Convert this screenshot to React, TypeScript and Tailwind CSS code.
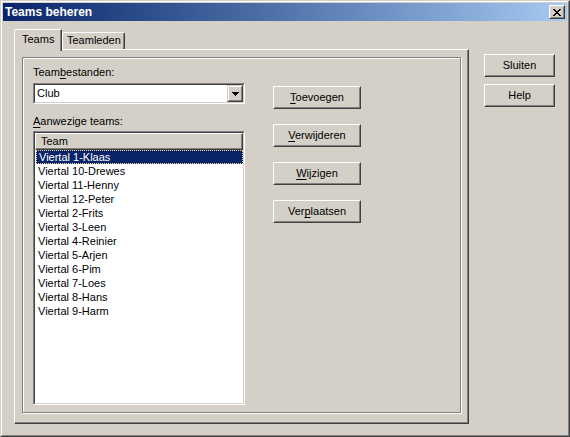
import React from "react";

const items = [
  "Viertal 1-Klaas",
  "Viertal 10-Drewes",
  "Viertal 11-Henny",
  "Viertal 12-Peter",
  "Viertal 2-Frits",
  "Viertal 3-Leen",
  "Viertal 4-Reinier",
  "Viertal 5-Arjen",
  "Viertal 6-Pim",
  "Viertal 7-Loes",
  "Viertal 8-Hans",
  "Viertal 9-Harm",
];

function Btn({ w, h, children }: { w: string; h: string; children: React.ReactNode }) {
  return (
    <div className={`${w} ${h} flex border border-t-white border-l-white border-r-[#404040] border-b-[#404040]`}>
      <div className="flex-1 flex items-center justify-center border border-t-[#d4d0c8] border-l-[#d4d0c8] border-r-[#808080] border-b-[#808080] leading-[13px]">
        {children}
      </div>
    </div>
  );
}

function U({ children }: { children: React.ReactNode }) {
  return <span className="underline underline-offset-[2px] decoration-[1px]">{children}</span>;
}

export default function App() {
  return (
    <div className="w-[570px] h-[437px] bg-[#d4d0c8] font-['Liberation_Sans',Arial,sans-serif] text-[11px] text-black leading-[13px] select-none">
      <div className="w-full h-full border border-t-[#d4d0c8] border-l-[#d4d0c8] border-r-[#404040] border-b-[#404040]">
        <div className="w-full h-full border border-t-white border-l-white border-r-[#808080] border-b-[#808080] p-px flex flex-col">
          {/* Title bar */}
          <div className="h-[18px] flex items-center justify-between bg-gradient-to-r from-[#0a246a] to-[#a6caf0] pl-[2px] pr-[2px]">
            <span className="text-white font-bold text-[12px] leading-[14px]">Teams beheren</span>
            <div className="w-[16px] h-[14px] flex border border-t-white border-l-white border-r-[#404040] border-b-[#404040] bg-[#d4d0c8]">
              <div className="flex-1 flex items-center justify-center border border-t-[#d4d0c8] border-l-[#d4d0c8] border-r-[#808080] border-b-[#808080]">
                <svg width="8" height="7" viewBox="0 0 8 7" shapeRendering="crispEdges">
                  <path d="M0 0h2v1H0zM6 0h2v1H6zM1 1h2v1H1zM5 1h2v1H5zM2 2h4v1H2zM3 3h2v1H3zM2 4h4v1H2zM1 5h2v1H1zM5 5h2v1H5zM0 6h2v1H0zM6 6h2v1H6z" fill="#000" />
                </svg>
              </div>
            </div>
          </div>

          {/* Content */}
          <div className="flex pl-[11px] pt-[8px]">
            {/* Tab control */}
            <div className="flex flex-col w-[455px]">
              <div className="flex items-start h-[20px]">
                <div className="relative z-10 w-[48px] h-[22px] bg-[#d4d0c8] flex border-l border-t border-r border-l-white border-t-white border-r-[#404040] rounded-tl-[2px]">
                  <div className="flex-1 border-r border-r-[#808080] pl-[7px] pt-[3px]">Teams</div>
                </div>
                <div className="mt-[3px] w-[63px] h-[17px] flex border-l border-t border-r border-l-white border-t-white border-r-[#404040] rounded-t-[2px]">
                  <div className="flex-1 border-r border-r-[#808080] pl-[4px] pt-[1px]">Teamleden</div>
                </div>
              </div>
              <div className="w-[455px] h-[375px] flex border border-t-white border-l-white border-r-[#404040] border-b-[#404040]">
                <div className="flex-1 border-r border-b border-r-[#808080] border-b-[#808080] pl-[7px] pt-[7px]">
                  {/* Group box */}
                  <div className="w-[439px] h-[356px] border border-[#808080] shadow-[inset_1px_1px_0_#fff,1px_1px_0_#fff] flex">
                    <div className="flex flex-col pl-[10px] pt-[8px] w-[222px]">
                      <div>
                        Team<U>b</U>estanden:
                      </div>
                      {/* Combo */}
                      <div className="mt-[4px] w-[212px] h-[21px] flex border border-t-[#808080] border-l-[#808080] border-r-white border-b-white">
                        <div className="flex-1 flex border border-t-[#404040] border-l-[#404040] border-r-[#d4d0c8] border-b-[#d4d0c8] bg-white">
                          <div className="flex-1 pl-[2px] pt-[2px]">Club</div>
                          <div className="w-[16px] h-[17px] bg-[#d4d0c8] flex border border-t-[#d4d0c8] border-l-[#d4d0c8] border-r-[#404040] border-b-[#404040]">
                            <div className="flex-1 flex items-center justify-center border border-t-white border-l-white border-r-[#808080] border-b-[#808080]">
                              <svg width="7" height="4" viewBox="0 0 7 4" shapeRendering="crispEdges">
                                <path d="M0 0h7v1H0zM1 1h5v1H1zM2 2h3v1H2zM3 3h1v1H3z" fill="#000" />
                              </svg>
                            </div>
                          </div>
                        </div>
                      </div>
                      <div className="mt-[11px]">
                        <U>A</U>anwezige teams:
                      </div>
                      {/* List view */}
                      <div className="mt-[3px] w-[212px] h-[274px] flex border border-t-[#808080] border-l-[#808080] border-r-white border-b-white">
                        <div className="flex-1 flex flex-col border border-t-[#404040] border-l-[#404040] border-r-[#d4d0c8] border-b-[#d4d0c8] bg-white">
                          <div className="h-[17px] flex border border-t-white border-l-white border-r-[#404040] border-b-[#404040] bg-[#d4d0c8]">
                            <div className="flex-1 border-r border-b border-r-[#808080] border-b-[#808080] pl-[5px] pt-[1px]">Team</div>
                          </div>
                          <div className="flex flex-col">
                            {items.map((t, i) =>
                              i === 0 ? (
                                <div key={t} className="h-[14px] ml-px bg-[#0a246a] text-white border border-dotted border-[#f5db95] pl-[2px] leading-[12px]">
                                  {t}
                                </div>
                              ) : (
                                <div key={t} className="h-[14px] pl-[3px] leading-[14px]">
                                  {t}
                                </div>
                              )
                            )}
                          </div>
                        </div>
                      </div>
                    </div>
                    <div className="flex flex-col gap-[15px] pt-[28px] ml-[28px]">
                      <Btn w="w-[88px]" h="h-[23px]">
                        <span><U>T</U>oevoegen</span>
                      </Btn>
                      <Btn w="w-[88px]" h="h-[23px]">
                        <span><U>V</U>erwijderen</span>
                      </Btn>
                      <Btn w="w-[88px]" h="h-[23px]">
                        <span><U>W</U>ijzigen</span>
                      </Btn>
                      <Btn w="w-[88px]" h="h-[23px]">
                        <span>Ver<U>p</U>laatsen</span>
                      </Btn>
                    </div>
                  </div>
                </div>
              </div>
            </div>

            {/* Right buttons */}
            <div className="ml-[15px] mt-[25px] flex flex-col gap-[7px]">
              <Btn w="w-[71px]" h="h-[23px]">Sluiten</Btn>
              <Btn w="w-[71px]" h="h-[23px]">Help</Btn>
            </div>
          </div>
        </div>
      </div>
    </div>
  );
}
